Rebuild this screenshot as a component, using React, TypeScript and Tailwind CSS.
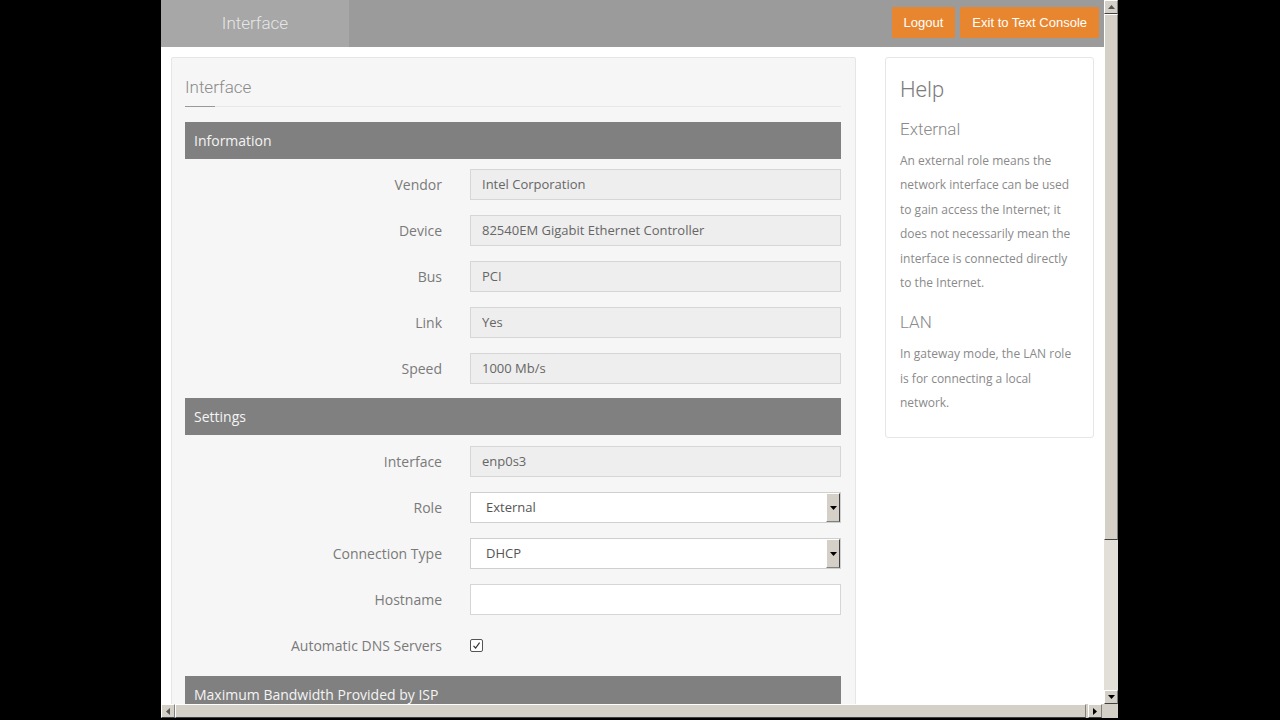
import React from 'react';

const body = { fontFamily: '"Open Sans", "Noto Sans", sans-serif' };
const light = { fontFamily: 'Roboto, "Open Sans", sans-serif' };

type Row = { label: string; value?: string; kind: 'readonly' | 'select' | 'text' | 'check' };

const infoRows: Row[] = [
  { label: 'Vendor', value: 'Intel Corporation', kind: 'readonly' },
  { label: 'Device', value: '82540EM Gigabit Ethernet Controller', kind: 'readonly' },
  { label: 'Bus', value: 'PCI', kind: 'readonly' },
  { label: 'Link', value: 'Yes', kind: 'readonly' },
  { label: 'Speed', value: '1000 Mb/s', kind: 'readonly' },
];

const settingsRows: Row[] = [
  { label: 'Interface', value: 'enp0s3', kind: 'readonly' },
  { label: 'Role', value: 'External', kind: 'select' },
  { label: 'Connection Type', value: 'DHCP', kind: 'select' },
  { label: 'Hostname', value: '', kind: 'text' },
  { label: 'Automatic DNS Servers', kind: 'check' },
];

const SectionHeader: React.FC<{ title: string }> = ({ title }) => (
  <div className="h-[37px] bg-[#808080] flex items-center px-[9px] text-[14px] text-[#f4f4f4]" style={body}>
    {title}
  </div>
);

const Field: React.FC<{ row: Row }> = ({ row }) => {
  if (row.kind === 'check') {
    return (
      <div className="h-[31px] flex items-center">
        <div className="w-[13px] h-[13px] border border-[#555] bg-white flex items-center justify-center rounded-[2px]">
          <svg width="9" height="9" viewBox="0 0 9 9">
            <path d="M1.5 4.8 L3.6 7 L7.6 1.6" fill="none" stroke="#333" strokeWidth="1.2" />
          </svg>
        </div>
      </div>
    );
  }
  if (row.kind === 'select') {
    return (
      <div className="h-[31px] w-[371px] border border-[#cfcfcf] bg-white flex items-center" style={body}>
        <span className="flex-1 pl-[15px] text-[13px] text-[#555]">{row.value}</span>
        <div className="w-[14px] h-[29px] bg-[#d4d0c8] border-l border-t border-l-white border-t-white border-r border-b border-r-[#404040] border-b-[#808080] flex items-center justify-center">
          <svg width="7" height="4" viewBox="0 0 7 4">
            <path d="M0 0 H7 L3.5 4 Z" fill="#000" />
          </svg>
        </div>
      </div>
    );
  }
  const bg = row.kind === 'readonly' ? 'bg-[#eeeeee]' : 'bg-white';
  return (
    <div className={`h-[31px] w-[371px] border border-[#d6d6d6] ${bg} flex items-center px-[11px] text-[13px] text-[#666]`} style={body}>
      {row.value}
    </div>
  );
};

const FormRows: React.FC<{ rows: Row[] }> = ({ rows }) => (
  <div className="flex flex-col gap-[15px] py-[10px]">
    {rows.map((r) => (
      <div key={r.label} className="flex items-center">
        <div className="w-[257px] text-right text-[14px] text-[#7a7a7a]" style={body}>
          {r.label}
        </div>
        <div className="ml-[28px]">
          <Field row={r} />
        </div>
      </div>
    ))}
  </div>
);

const Bevel: React.FC<{ children?: React.ReactNode; className?: string }> = ({ children, className }) => (
  <div
    className={`bg-[#d4d0c8] border-t border-l border-t-white border-l-white border-b border-r border-b-[#404040] border-r-[#808080] flex items-center justify-center ${className ?? ''}`}
  >
    {children}
  </div>
);

export default function App() {
  return (
    <div className="w-[1280px] h-[720px] bg-black flex overflow-hidden">
      <div className="w-[161px] shrink-0" />
      <div className="w-[957px] shrink-0 flex flex-col">
        <div className="h-[704px] flex">
          {/* page */}
          <div className="w-[943px] h-full bg-white overflow-hidden flex flex-col">
            <div className="h-[47px] shrink-0 bg-[#9b9b9b] flex items-stretch">
              <div className="w-[188px] bg-[#a7a7a7] flex items-center justify-center text-[17px] font-light text-[#e6e6e6]" style={light}>
                Interface
              </div>
              <div className="flex-1" />
              <div className="flex items-start gap-[5px] pt-[7px] pr-[5px]" style={{ fontFamily: '"Liberation Sans", Arial, sans-serif' }}>
                <button className="h-[31px] px-[12px] bg-[#e8862f] text-white text-[13px] rounded-[2px]">Logout</button>
                <button className="h-[31px] px-[12px] bg-[#e8862f] text-white text-[13px] rounded-[2px]">Exit to Text Console</button>
              </div>
            </div>

            <div className="flex items-start pt-[10px] px-[10px] gap-[29px]">
              {/* main panel */}
              <div className="w-[685px] shrink-0 bg-[#f6f6f6] border border-[#e6e6e6] rounded-[2px] pl-[13px] pr-[14px] pb-4">
                <div className="pt-[18px] text-[17px] font-light text-[#8a8a8a] leading-[22px]" style={light}>
                  Interface
                </div>
                <div className="mt-[8px] mb-[15px] h-px bg-[#e8e8e8] relative">
                  <div className="absolute left-0 top-0 w-[30px] h-px bg-[#999]" />
                </div>
                <SectionHeader title="Information" />
                <FormRows rows={infoRows} />
                <div className="mt-[4px]">
                  <SectionHeader title="Settings" />
                </div>
                <div className="pt-px">
                  <FormRows rows={settingsRows} />
                </div>
                <div className="mt-[5px]">
                  <SectionHeader title="Maximum Bandwidth Provided by ISP" />
                </div>
              </div>

              {/* help panel */}
              <div className="w-[209px] shrink-0 bg-white border border-[#e6e6e6] rounded-[3px] px-[14px] pt-[18px] pb-[21px]">
                <div className="text-[22px] font-light text-[#7d7d7d] leading-[28px]" style={light}>
                  Help
                </div>
                <div className="mt-[14px] text-[17px] font-light text-[#8a8a8a] leading-[22px]" style={light}>
                  External
                </div>
                <p className="mt-[9px] text-[12px] leading-[24.4px] text-[#8a8a8a]" style={body}>
                  An external role means the network interface can be used to gain access the Internet; it does not necessarily mean the interface is connected directly to the Internet.
                </p>
                <div className="mt-[16px] text-[17px] font-light text-[#8a8a8a] leading-[22px]" style={light}>
                  LAN
                </div>
                <p className="mt-[9px] text-[12px] leading-[24.4px] text-[#8a8a8a]" style={body}>
                  In gateway mode, the LAN role is for connecting a local network.
                </p>
              </div>
            </div>
          </div>

          {/* vertical scrollbar */}
          <div className="w-[14px] h-full bg-[#d4d0c8] flex flex-col">
            <Bevel className="h-[14px] w-[14px] shrink-0">
              <svg width="7" height="4" viewBox="0 0 7 4">
                <path d="M0 4 H7 L3.5 0 Z" fill="#555" />
              </svg>
            </Bevel>
            <Bevel className="h-[526px] w-[14px] shrink-0" />
            <div className="flex-1 bg-[#e2dfd9]" />
            <Bevel className="h-[14px] w-[14px] shrink-0">
              <svg width="7" height="4" viewBox="0 0 7 4">
                <path d="M0 0 H7 L3.5 4 Z" fill="#000" />
              </svg>
            </Bevel>
          </div>
        </div>

        {/* horizontal scrollbar */}
        <div className="h-[14px] bg-[#d4d0c8] flex">
          <Bevel className="w-[14px] h-[14px] shrink-0">
            <svg width="4" height="7" viewBox="0 0 4 7">
              <path d="M4 0 V7 L0 3.5 Z" fill="#555" />
            </svg>
          </Bevel>
          <Bevel className="w-[911px] h-[14px] shrink-0" />
          <div className="flex-1" />
          <Bevel className="w-[14px] h-[14px] shrink-0">
            <svg width="4" height="7" viewBox="0 0 4 7">
              <path d="M0 0 V7 L4 3.5 Z" fill="#000" />
            </svg>
          </Bevel>
          <div className="w-[16px] shrink-0 bg-[#d4d0c8]" />
        </div>
      </div>
    </div>
  );
}
